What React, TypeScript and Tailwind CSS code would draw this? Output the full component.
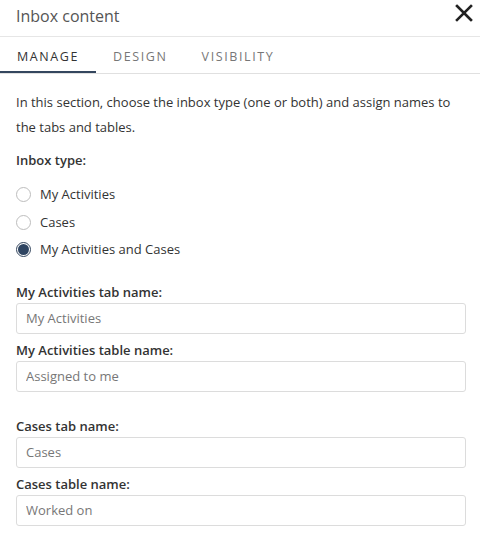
import { useState } from 'react';

const tabs = ['Manage', 'Design', 'Visibility'];

const options = ['My Activities', 'Cases', 'My Activities and Cases'];

function Field({ label, value, className = '' }: { label: string; value: string; className?: string }) {
  return (
    <div className={className}>
      <label className="block h-5 leading-5 text-[13px] font-semibold text-[#333]">{label}</label>
      <input
        defaultValue={value}
        className="mt-px block w-full h-[31px] px-[9px] border border-[#dcdcdc] rounded-[3px] bg-white text-[13px] text-[#777] outline-none"
      />
    </div>
  );
}

export default function App() {
  const [tab, setTab] = useState('Manage');
  const [type, setType] = useState('My Activities and Cases');

  return (
    <div className="w-[480px] h-[545px] bg-white overflow-hidden font-['Open_Sans',sans-serif]">
      <div className="h-[37px] flex items-center justify-between pl-4 pr-1 border-b border-[#e6e6e6]">
        <h1 className="text-[16px] text-[#555] -mt-1">Inbox content</h1>
        <button className="w-6 h-6 flex items-center justify-center -mt-[10px]">
          <svg width="18" height="18" viewBox="0 0 18 18" fill="none" stroke="#222" strokeWidth="2.6" strokeLinecap="square">
            <path d="M2 2 L16 16 M16 2 L2 16" />
          </svg>
        </button>
      </div>

      <div className="h-[37px] flex border-b border-[#e0e0e0]">
        {tabs.map((t) => (
          <button
            key={t}
            onClick={() => setTab(t)}
            className={
              'h-full px-[17px] pt-[7px] uppercase text-[12.5px] tracking-[1.6px] ' +
              (tab === t ? 'text-[#333] border-b-2 border-[#34465e]' : 'text-[#777] border-b-2 border-transparent')
            }
          >
            {t}
          </button>
        ))}
      </div>

      <div className="pl-4 pr-[14px]">
        <p className="mt-4 text-[13px] leading-[25px] text-[#333]">
          In this section, choose the inbox type (one or both) and assign names to the tabs and tables.
        </p>

        <div className="mt-[10px] h-5 leading-5 text-[13px] font-semibold text-[#333]">Inbox type:</div>

        <div className="mt-[11px]">
          {options.map((o) => (
            <label key={o} className="h-[27.5px] flex items-center gap-[9px] cursor-pointer">
              <span
                onClick={() => setType(o)}
                className={
                  'w-[15px] h-[15px] rounded-full border flex items-center justify-center ' +
                  (type === o ? 'border-[#34465e]' : 'border-[#bdbdbd]')
                }
              >
                {type === o && <span className="w-[11px] h-[11px] rounded-full bg-[#2f4562]" />}
              </span>
              <span className="text-[13px] text-[#333]">{o}</span>
            </label>
          ))}
        </div>

        <Field className="mt-[18px]" label="My Activities tab name:" value="My Activities" />
        <Field className="mt-[6px]" label="My Activities table name:" value="Assigned to me" />
        <Field className="mt-[24px]" label="Cases tab name:" value="Cases" />
        <Field className="mt-[6px]" label="Cases table name:" value="Worked on" />
      </div>
    </div>
  );
}
